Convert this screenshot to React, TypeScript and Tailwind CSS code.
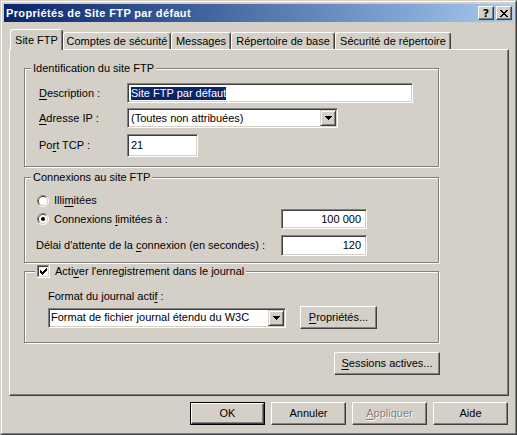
import React from "react";

const sunken =
  "border border-t-[#808080] border-l-[#808080] border-r-white border-b-white shadow-[inset_1px_1px_0_#404040,inset_-1px_-1px_0_#d4d0c8]";
const raised =
  "border border-t-white border-l-white border-r-[#404040] border-b-[#404040] shadow-[inset_-1px_-1px_0_#808080]";
const etched =
  "border border-[#808080] shadow-[inset_1px_1px_0_#fff,1px_1px_0_#fff]";

function U({ children }: { children: React.ReactNode }) {
  return <span className="underline underline-offset-2 decoration-1">{children}</span>;
}

function XIcon() {
  const px: [number, number][] = [
    [0, 0], [1, 0], [6, 0], [7, 0],
    [1, 1], [2, 1], [5, 1], [6, 1],
    [2, 2], [3, 2], [4, 2], [5, 2],
    [3, 3], [4, 3],
    [2, 4], [3, 4], [4, 4], [5, 4],
    [1, 5], [2, 5], [5, 5], [6, 5],
    [0, 6], [1, 6], [6, 6], [7, 6],
  ];
  return (
    <svg width="8" height="7" viewBox="0 0 8 7" shapeRendering="crispEdges">
      {px.map(([x, y], i) => (
        <rect key={i} x={x} y={y} width="1" height="1" fill="#000" />
      ))}
    </svg>
  );
}

function Arrow() {
  return (
    <svg width="7" height="4" viewBox="0 0 7 4" shapeRendering="crispEdges">
      <rect x="0" y="0" width="7" height="1" fill="#000" />
      <rect x="1" y="1" width="5" height="1" fill="#000" />
      <rect x="2" y="2" width="3" height="1" fill="#000" />
      <rect x="3" y="3" width="1" height="1" fill="#000" />
    </svg>
  );
}

function Radio({ checked }: { checked?: boolean }) {
  return (
    <svg width="12" height="12" viewBox="0 0 12 12" className="shrink-0">
      <path d="M2.11 9.89 A5.5 5.5 0 0 1 9.89 2.11" stroke="#808080" fill="none" />
      <path d="M9.89 2.11 A5.5 5.5 0 0 1 2.11 9.89" stroke="#ffffff" fill="none" />
      <path d="M2.82 9.18 A4.5 4.5 0 0 1 9.18 2.82" stroke="#404040" fill="none" />
      <path d="M9.18 2.82 A4.5 4.5 0 0 1 2.82 9.18" stroke="#d4d0c8" fill="none" />
      <circle cx="6" cy="6" r="4" fill="#fff" />
      {checked && <circle cx="6" cy="6" r="2" fill="#000" />}
    </svg>
  );
}

function Checkbox() {
  const cols: [number, number][] = [
    [3, 5], [4, 6], [5, 7], [6, 6], [7, 5], [8, 4], [9, 3],
  ];
  return (
    <svg width="13" height="13" viewBox="0 0 13 13" shapeRendering="crispEdges" className="shrink-0">
      <rect x="0" y="0" width="13" height="13" fill="#fff" />
      <rect x="0" y="0" width="12" height="1" fill="#808080" />
      <rect x="0" y="0" width="1" height="12" fill="#808080" />
      <rect x="1" y="1" width="10" height="1" fill="#404040" />
      <rect x="1" y="1" width="1" height="10" fill="#404040" />
      <rect x="12" y="0" width="1" height="13" fill="#fff" />
      <rect x="0" y="12" width="13" height="1" fill="#fff" />
      <rect x="11" y="1" width="1" height="11" fill="#d4d0c8" />
      <rect x="1" y="11" width="11" height="1" fill="#d4d0c8" />
      {cols.map(([x, y], i) => (
        <rect key={i} x={x} y={y} width="1" height="3" fill="#000" />
      ))}
    </svg>
  );
}

function DropBtn() {
  return (
    <div className="w-[16px] h-[16px] shrink-0 bg-[#d4d0c8] border border-t-[#d4d0c8] border-l-[#d4d0c8] border-r-[#404040] border-b-[#404040] shadow-[inset_1px_1px_0_#fff,inset_-1px_-1px_0_#808080] flex items-center justify-center">
      <Arrow />
    </div>
  );
}

function Tab({ label, w, active }: { label: string; w: string; active?: boolean }) {
  if (active) {
    return (
      <div
        className={`${w} relative z-10 h-[21px] -mb-px bg-[#d4d0c8] border-t border-l border-r border-t-white border-l-white border-r-[#404040] shadow-[inset_-1px_0_0_#808080] rounded-t-[3px] flex justify-center pt-[4px] whitespace-nowrap`}
      >
        {label}
      </div>
    );
  }
  return (
    <div
      className={`${w} h-[17px] bg-[#d4d0c8] border-t border-l border-r border-t-white border-l-white border-r-[#404040] shadow-[inset_-1px_0_0_#808080] rounded-t-[3px] flex items-center justify-center whitespace-nowrap`}
    >
      {label}
    </div>
  );
}

function Button({
  w,
  children,
  def,
  disabled,
}: {
  w: string;
  children: React.ReactNode;
  def?: boolean;
  disabled?: boolean;
}) {
  const inner = (
    <div
      className={`h-full w-full bg-[#d4d0c8] ${raised} flex items-center justify-center whitespace-nowrap ${
        disabled ? "text-[#808080] [text-shadow:1px_1px_0_#fff]" : ""
      }`}
    >
      {children}
    </div>
  );
  if (def) {
    return <div className={`${w} h-[23px] border border-black`}>{inner}</div>;
  }
  return <div className={`${w} h-[23px]`}>{inner}</div>;
}

export default function App() {
  return (
    <div className="w-[517px] h-[435px] bg-[#d4d0c8] border border-t-[#d4d0c8] border-l-[#d4d0c8] border-r-[#404040] border-b-[#404040] font-['Liberation_Sans',Arial,sans-serif] text-[11px] leading-[13px] text-black select-none">
      <div className="h-full border border-t-white border-l-white border-r-[#808080] border-b-[#808080] p-[2px] flex flex-col">
        {/* Title bar */}
        <div className="h-[18px] flex items-center bg-linear-to-r from-[#0a246a] to-[#a6caf0] pl-[2px] pr-[1px]">
          <span className="flex-1 text-white font-bold tracking-[0.35px] whitespace-nowrap">
            Propriétés de Site FTP par défaut
          </span>
          <div className={`w-[16px] h-[14px] bg-[#d4d0c8] ${raised} flex items-center justify-center font-bold text-[11px] leading-[11px] font-['DejaVu_Sans',sans-serif]`}>
            ?
          </div>
          <div className={`w-[16px] h-[14px] ml-[2px] bg-[#d4d0c8] ${raised} flex items-center justify-center`}>
            <XIcon />
          </div>
        </div>

        <div className="pl-[5px] pt-[7px]">
          {/* Tabs */}
          <div className="flex items-end h-[20px] pl-[1px]">
            <Tab label="Site FTP" w="w-[53px]" active />
            <Tab label="Comptes de sécurité" w="w-[108px]" />
            <Tab label="Messages" w="w-[60px]" />
            <Tab label="Répertoire de base" w="w-[104px]" />
            <Tab label="Sécurité de répertoire" w="w-[116px]" />
          </div>

          {/* Panel */}
          <div className="w-[500px] h-[347px] border border-t-white border-l-white border-r-[#404040] border-b-[#404040] shadow-[inset_-1px_-1px_0_#808080] pt-[18px] pl-[14px]">
            {/* Group 1 */}
            <div className={`relative w-[415px] ${etched} pt-[14px] pb-[9px] pl-[14px]`}>
              <span className="absolute left-[6px] top-[-7px] px-[2px] bg-[#d4d0c8] whitespace-nowrap">
                Identification du site FTP
              </span>
              <div className="flex items-center h-[20px]">
                <span className="w-[88px]">
                  <U>D</U>escription :
                </span>
                <div className={`w-[286px] h-[20px] bg-white ${sunken} flex items-center pl-[3px]`}>
                  <span className="bg-[#0a246a] text-white">Site FTP par défaut</span>
                </div>
              </div>
              <div className="flex items-center h-[20px] mt-[5px]">
                <span className="w-[88px]">
                  <U>A</U>dresse IP :
                </span>
                <div className={`w-[211px] h-[20px] bg-white ${sunken} p-[1px] flex items-center`}>
                  <span className="flex-1 pl-[2px] whitespace-nowrap">(Toutes non attribuées)</span>
                  <DropBtn />
                </div>
              </div>
              <div className="flex items-center h-[23px] mt-[6px]">
                <span className="w-[88px]">
                  Po<U>r</U>t TCP :
                </span>
                <div className={`w-[71px] h-[23px] bg-white ${sunken} flex items-center pl-[3px]`}>21</div>
              </div>
            </div>

            {/* Group 2 */}
            <div className={`relative w-[415px] ${etched} mt-[10px] pt-[16px] pb-[6px] pl-[11px] pr-[71px]`}>
              <span className="absolute left-[6px] top-[-7px] px-[2px] bg-[#d4d0c8] whitespace-nowrap">
                Connexions au site FTP
              </span>
              <div className="flex items-center h-[13px] pl-[1px]">
                <Radio />
                <span className="ml-[5px]">
                  Illi<U>m</U>itées
                </span>
              </div>
              <div className="flex items-center h-[20px] mt-[2px] pl-[1px]">
                <Radio checked />
                <span className="ml-[5px] flex-1">
                  Connexions <U>l</U>imitées à :
                </span>
                <div className={`w-[86px] h-[20px] bg-white ${sunken} flex items-center justify-end pr-[5px]`}>
                  100 000
                </div>
              </div>
              <div className="flex items-center h-[21px] mt-[6px]">
                <span className="flex-1 whitespace-nowrap">
                  Délai d'attente de la <U>c</U>onnexion (en secondes) :
                </span>
                <div className={`w-[86px] h-[21px] bg-white ${sunken} flex items-center justify-end pr-[5px]`}>
                  120
                </div>
              </div>
            </div>

            {/* Group 3 */}
            <div className={`relative w-[415px] ${etched} mt-[8px] pt-[18px] pb-[13px] pl-[23px]`}>
              <div className="absolute left-[10px] top-[-7px] h-[13px] px-[2px] bg-[#d4d0c8] flex items-center whitespace-nowrap">
                <Checkbox />
                <span className="ml-[5px]">
                  Acti<U>v</U>er l'enregistrement dans le journal
                </span>
              </div>
              <div className="h-[13px]">
                Format du journal acti<U>f</U> :
              </div>
              <div className="flex items-center h-[23px] mt-[3px]">
                <div className={`w-[238px] h-[20px] bg-white ${sunken} p-[1px] flex items-center`}>
                  <span className="flex-1 pl-[1px] whitespace-nowrap">Format de fichier journal étendu du W3C</span>
                  <DropBtn />
                </div>
                <div className="ml-[14px]">
                  <Button w="w-[77px]">
                    <span>
                      <U>P</U>ropriétés...
                    </span>
                  </Button>
                </div>
              </div>
            </div>

            <div className="w-[416px] flex justify-end mt-[9px]">
              <Button w="w-[106px]">
                <span>
                  <U>S</U>essions actives...
                </span>
              </Button>
            </div>
          </div>

          {/* Bottom buttons */}
          <div className="w-[500px] flex justify-end gap-[6px] pr-[1px] mt-[6px]">
            <Button w="w-[75px]" def>
              OK
            </Button>
            <Button w="w-[75px]">Annuler</Button>
            <Button w="w-[75px]" disabled>
              <span>
                <U>A</U>ppliquer
              </span>
            </Button>
            <Button w="w-[75px]">Aide</Button>
          </div>
        </div>
      </div>
    </div>
  );
}
